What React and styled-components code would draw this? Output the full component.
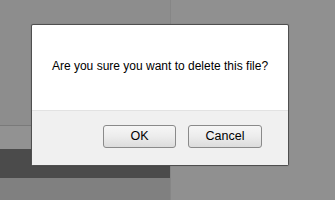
import React from 'react';
import styled, { createGlobalStyle } from 'styled-components';

const GlobalStyle = createGlobalStyle`
  html, body {
    margin: 0;
    padding: 0;
    background: #8f8f8f;
    font-family: "Liberation Sans", Arial, sans-serif;
  }
`;

const Screen = styled.div`
  position: relative;
  width: 335px;
  height: 200px;
  display: flex;
  overflow: hidden;
  background: #8f8f8f;
`;

const LeftPane = styled.div`
  width: 170px;
  display: flex;
  flex-direction: column;
  border-right: 1px solid #868686;
`;

const Band = styled.div`
  height: ${(p) => p.$h}px;
  flex: ${(p) => (p.$h ? 'none' : '1')};
  background: ${(p) => p.$bg};
  border-bottom: ${(p) => (p.$line ? `1px solid ${p.$line}` : 'none')};
`;

const RightPane = styled.div`
  flex: 1;
  background: #909090;
`;

const Dialog = styled.div`
  position: absolute;
  left: 31px;
  top: 24px;
  width: 256px;
  height: 140px;
  border: 1px solid #4f4f4f;
  border-radius: 2px;
  background: #fff;
  display: flex;
  flex-direction: column;
  box-shadow: 0 0 1px rgba(0, 0, 0, 0.3);
`;

const Body = styled.div`
  height: 85px;
  display: flex;
  align-items: center;
  justify-content: center;
  font-size: 12px;
  color: #000;
  padding-bottom: 3px;
  box-sizing: border-box;
`;

const Footer = styled.div`
  flex: 1;
  background: #f0f0f0;
  border-top: 1px solid #e2e2e2;
  display: flex;
  justify-content: flex-end;
  align-items: flex-start;
  gap: 12px;
  padding: 14px 26px 0 0;
`;

const Button = styled.button`
  width: ${(p) => p.$w}px;
  height: 23px;
  border: 1px solid #8a8a8a;
  border-radius: 3px;
  background: linear-gradient(#f6f6f6 0%, #ececec 50%, #dcdcdc 100%);
  font-family: "Liberation Sans", Arial, sans-serif;
  font-size: 12.5px;
  color: #000;
  padding: 0;
  line-height: 21px;
`;

export default function App() {
  return (
    <>
      <GlobalStyle />
      <Screen>
        <LeftPane>
          <Band $h={125} $bg="#8d8d8d" $line="#7a7a7a" />
          <Band $h={23} $bg="#929292" />
          <Band $h={29} $bg="#4b4b4b" />
          <Band $bg="#808080" />
        </LeftPane>
        <RightPane />
        <Dialog>
          <Body>Are you sure you want to delete this file?</Body>
          <Footer>
            <Button $w={73}>OK</Button>
            <Button $w={74}>Cancel</Button>
          </Footer>
        </Dialog>
      </Screen>
    </>
  );
}
